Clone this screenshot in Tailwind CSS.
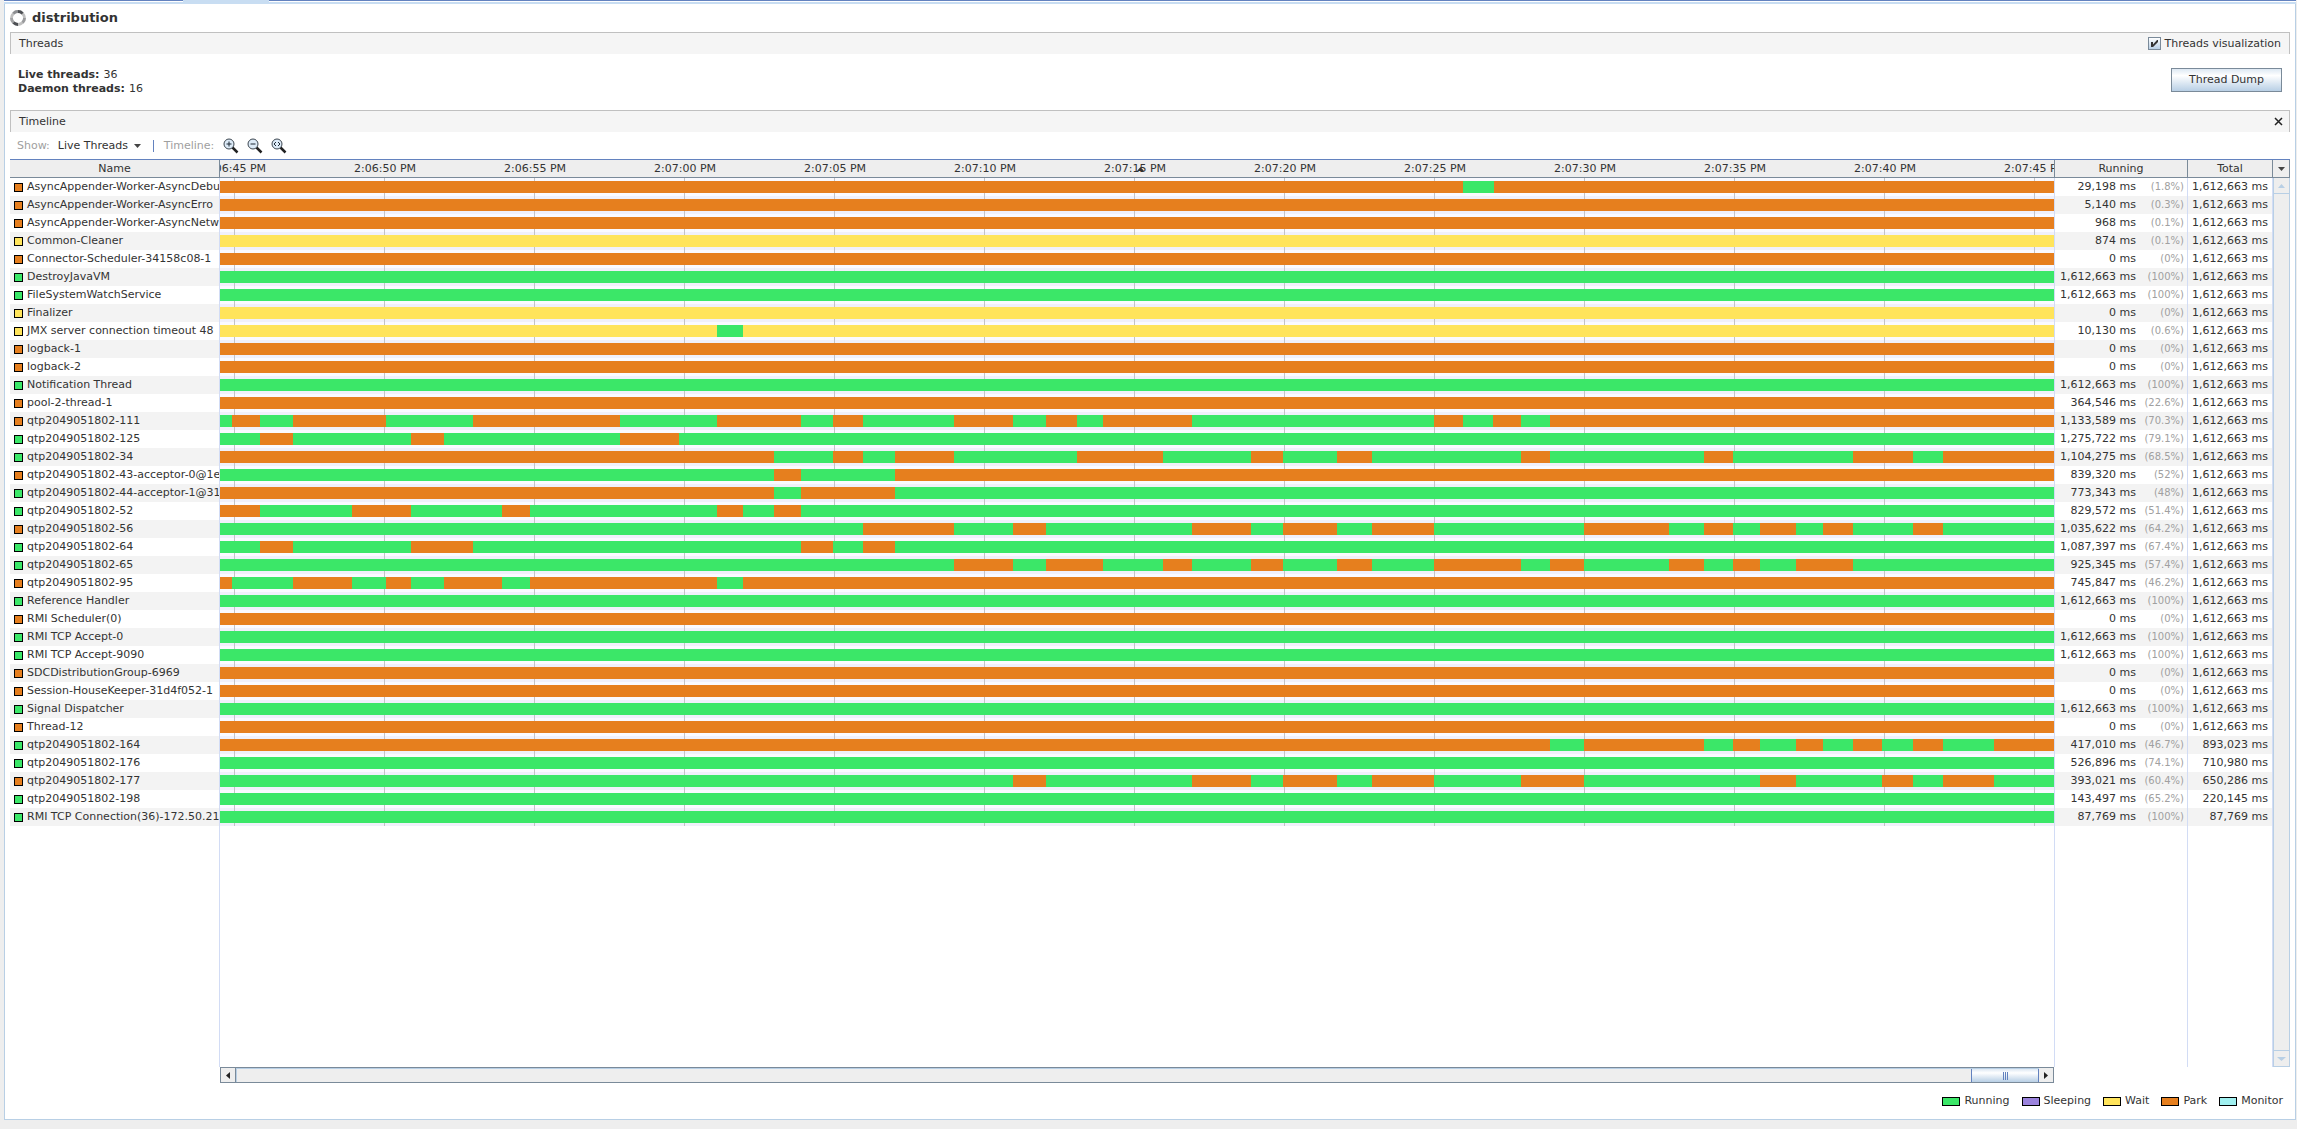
<!DOCTYPE html>
<html lang="en">

<head>
  <meta charset="UTF-8" />
  <meta name="viewport" content="width=device-width, initial-scale=1.0" />
  <title>distribution - Threads</title>
  <script src="https://cdn.jsdelivr.net/npm/@tailwindcss/browser@4"></script>
  <style>
    body {
      font-family: 'DejaVu Sans', sans-serif;
    }
  </style>
</head>

<body class="h-screen bg-[#eeeeee] text-[11px] leading-[14px] text-[#333333] flex flex-col pl-1 pr-px pb-[9px] overflow-hidden">
  <!-- Tab strip edge -->
  <div class="flex h-1 shrink-0 border-b-2 border-[#c8ddf2] bg-white">
    <div class="w-[179px] h-px bg-[#6382bf]"></div>
    <div class="w-[86px] h-1 bg-[#c8ddf2]"></div>
    <div class="grow h-px bg-[#6382bf]"></div>
  </div>

  <main class="grow min-h-0 flex flex-col bg-white border border-t-0 border-[#b8cfe5] pl-[5px] pr-[5px]">
    <!-- Title -->
    <header class="h-7 shrink-0 flex items-center gap-[6px]">
      <svg class="size-4" viewBox="0 0 16 16" fill="none" stroke-width="2.8">
        <circle cx="8" cy="8" r="6.500" stroke="#c0c0c0" />
        <path d="M3.400 3.400A6.500 6.500 0 0 1 8 1.500" stroke="#8d8f92" />
        <path d="M8 1.500A6.500 6.500 0 0 1 12.600 3.400" stroke="#4d5054" />
        <path d="M3.400 12.600A6.500 6.500 0 0 0 8 14.500" stroke="#4d5054" />
        <path d="M1.500 8A6.500 6.500 0 0 0 3.400 12.600" stroke="#a2a3a5" />
        <path d="M14.500 8A6.500 6.500 0 0 1 12.600 12.600" stroke="#999a9c" />
      </svg>
      <h1 class="text-[13px] leading-4 font-bold">distribution</h1>
    </header>

    <!-- Threads -->
    <section class="h-[22px] shrink-0 flex items-center justify-between bg-[#f5f5f5] border border-b-0 border-[#c0c0c0] px-2">
      <h2>Threads</h2>
      <label class="flex items-center gap-1">
        <span class="relative size-[13px]">
          <input type="checkbox" checked class="appearance-none block size-[13px] border border-[#7a8a99] bg-linear-to-b from-white to-[#b8cfe5]" />
          <svg class="absolute inset-0 size-[13px] pointer-events-none" viewBox="0 0 13 13" fill="#333333">
            <path d="M3 5h2v2.500L9 3h1v2L5 10H3z" />
          </svg>
        </span>
        Threads visualization
      </label>
    </section>
    <div class="h-14 shrink-0 flex items-start justify-between pt-[14px] px-2">
      <dl>
        <div class="flex gap-1"><dt class="font-bold">Live threads:</dt><dd>36</dd></div>
        <div class="flex gap-1"><dt class="font-bold">Daemon threads:</dt><dd>16</dd></div>
      </dl>
      <button type="button" class="w-[111px] h-6 border border-[#7a8a99] bg-linear-to-b from-[#dde8f3] via-white via-30% to-[#b8cfe5]">Thread Dump</button>
    </div>

    <!-- Timeline -->
    <section class="h-[22px] shrink-0 flex items-center justify-between bg-[#f5f5f5] border border-b-0 border-[#c0c0c0] pl-2 pr-[6px]">
      <h2>Timeline</h2>
      <button type="button" aria-label="Close timeline">
        <svg class="size-[9px]" viewBox="0 0 9 9" stroke="#222222" stroke-width="1.500"><path d="M1 1l7 7M8 1l-7 7" /></svg>
      </button>
    </section>
    <div class="h-[27px] shrink-0 flex items-center pl-[7px]">
      <label for="show" class="text-[#a0a0a0] mr-2">Show:</label>
      <div class="relative w-[83px]">
        <select id="show" class="appearance-none block w-full">
          <option>Live Threads</option>
        </select>
        <svg class="absolute right-0 top-[5px] w-[7px] h-1" viewBox="0 0 7 4" fill="#444444"><path d="M0 0h7L3.500 4z" /></svg>
      </div>
      <div class="w-px h-3 bg-[#6382bf] ml-3 mr-[10px]"></div>
      <span class="text-[#a0a0a0] mr-[9px]">Timeline:</span>
      <div class="flex gap-2">
        <button type="button" aria-label="Zoom in">
          <svg class="size-4" viewBox="0 0 16 16" fill="none">
            <path d="M9.500 9.500l5 5" stroke="#222222" stroke-width="2.500" />
            <circle cx="6" cy="6" r="5" fill="#dceaf7" stroke="#3c4650" />
            <path d="M3.500 6h5M6 3.500v5" stroke="#1d2935" />
          </svg>
        </button>
        <button type="button" aria-label="Zoom out">
          <svg class="size-4" viewBox="0 0 16 16" fill="none">
            <path d="M9.500 9.500l5 5" stroke="#222222" stroke-width="2.500" />
            <circle cx="6" cy="6" r="5" fill="#dceaf7" stroke="#3c4650" />
            <path d="M3.500 6h5" stroke="#1d2935" />
          </svg>
        </button>
        <button type="button" aria-label="Scale to fit">
          <svg class="size-4" viewBox="0 0 16 16" fill="none">
            <path d="M9.500 9.500l5 5" stroke="#222222" stroke-width="2.500" />
            <circle cx="6" cy="6" r="5" fill="#dceaf7" stroke="#3c4650" />
            <path d="M5 4L3 6l2 2M7 4l2 2-2 2" stroke="#1d2935" />
          </svg>
        </button>
      </div>
    </div>

    <!-- Threads table with its vertical scroll bar -->
    <div class="grow min-h-0 flex border-t border-[#6382bf]">
      <div class="grow min-w-0">
        <table class="w-full h-full table-fixed border-separate border-spacing-0 whitespace-nowrap">
          <colgroup>
            <col class="w-[210px]" />
            <col />
            <col class="w-[133px]" />
            <col class="w-[85px]" />
          </colgroup>
          <thead>
            <tr class="h-[18px] bg-[#eeeeee]">
              <th class="h-[18px] p-0 font-normal border-r border-b border-[#7a8a99]">Name</th>
              <th class="h-[18px] p-0 font-normal border-r border-b border-[#7a8a99]">
                <div class="relative overflow-hidden">
                  <div id="axis" class="flex -ml-[60px]"></div>
                  <svg class="absolute left-1/2 top-[5px] w-[7px] h-1" viewBox="0 0 7 4" fill="#333333"><path d="M0 4h7L3.500 0z" /></svg>
                </div>
              </th>
              <th class="h-[18px] p-0 font-normal border-r border-b border-[#7a8a99]">Running</th>
              <th class="h-[18px] p-0 font-normal border-r border-b border-[#7a8a99]">Total</th>
            </tr>
          </thead>
          <tbody id="rows"></tbody>
        </table>
      </div>
      <div class="w-[17px] shrink-0 flex flex-col">
        <button type="button" aria-label="Columns" class="h-[18px] shrink-0 flex items-center justify-center bg-[#eeeeee] border-r border-b border-[#7a8a99]">
          <svg class="w-[7px] h-1" viewBox="0 0 7 4" fill="#444444"><path d="M0 0h7L3.500 4z" /></svg>
        </button>
        <div class="grow flex flex-col justify-between bg-[#eeeeee] border border-t-0 border-[#b8cfe5]">
          <button type="button" aria-label="Scroll up" class="h-4 flex items-center justify-center border-b border-[#b8cfe5]">
            <svg class="w-[7px] h-1" viewBox="0 0 7 4" fill="#b8cfe5"><path d="M0 4h7L3.500 0z" /></svg>
          </button>
          <button type="button" aria-label="Scroll down" class="h-4 flex items-center justify-center border-t border-[#b8cfe5]">
            <svg class="w-[9px] h-1" viewBox="0 0 9 4" fill="#b8cfe5"><path d="M0 0h9L4.500 4z" /></svg>
          </button>
        </div>
      </div>
    </div>

    <!-- Horizontal scroll bar -->
    <div class="shrink-0 h-4 flex ml-[210px] mr-[236px] bg-[#eeeeee] border border-[#7a8a99]">
      <button type="button" aria-label="Scroll left" class="w-[15px] flex items-center justify-center border-r border-[#7a8a99]">
        <svg class="w-1 h-[7px]" viewBox="0 0 4 7" fill="#222222"><path d="M4 0v7L0 3.500z" /></svg>
      </button>
      <div class="grow flex justify-end border-l border-t border-[#b8cfe5]">
        <div class="w-[68px] flex items-center justify-center gap-px border-x border-[#6382bf] bg-linear-to-b from-[#dde8f3] via-white via-30% to-[#b8cfe5]">
          <div class="w-px h-2 bg-[#6382bf]"></div>
          <div class="w-px h-2 bg-[#6382bf]"></div>
          <div class="w-px h-2 bg-[#6382bf]"></div>
        </div>
      </div>
      <button type="button" aria-label="Scroll right" class="w-[14px] flex items-center justify-center">
        <svg class="w-1 h-[7px]" viewBox="0 0 4 7" fill="#222222"><path d="M0 0v7L4 3.500z" /></svg>
      </button>
    </div>

    <!-- Legend -->
    <footer class="h-9 shrink-0 flex items-center justify-end gap-3 pr-[7px]">
      <div class="flex items-center gap-1"><span class="w-[18px] h-[9px] border border-black bg-[#3be768]"></span>Running</div>
      <div class="flex items-center gap-1"><span class="w-[18px] h-[9px] border border-black bg-[#9b83dd]"></span>Sleeping</div>
      <div class="flex items-center gap-1"><span class="w-[18px] h-[9px] border border-black bg-[#ffe45b]"></span>Wait</div>
      <div class="flex items-center gap-1"><span class="w-[18px] h-[9px] border border-black bg-[#e67f1e]"></span>Park</div>
      <div class="flex items-center gap-1"><span class="w-[18px] h-[9px] border border-black bg-[#a0f0f0]"></span>Monitor</div>
    </footer>
  </main>

  <script>
    const colors = { R: 'bg-[#3be768]', W: 'bg-[#ffe45b]', P: 'bg-[#e67f1e]' };
    const full = '1,612,663';

    // name, current state, running ms, running %, total ms, alternating states, x of each state change
    const threads = [
      ['AsyncAppender-Worker-AsyncDebu', 'P', '29,198', '1.8', full, 'PR', [1243, 1274]],
      ['AsyncAppender-Worker-AsyncErro', 'P', '5,140', '0.3', full, 'P', []],
      ['AsyncAppender-Worker-AsyncNetw', 'P', '968', '0.1', full, 'P', []],
      ['Common-Cleaner', 'W', '874', '0.1', full, 'W', []],
      ['Connector-Scheduler-34158c08-1', 'P', '0', '0', full, 'P', []],
      ['DestroyJavaVM', 'R', full, '100', full, 'R', []],
      ['FileSystemWatchService', 'R', full, '100', full, 'R', []],
      ['Finalizer', 'W', '0', '0', full, 'W', []],
      ['JMX server connection timeout 48', 'W', '10,130', '0.6', full, 'WR', [497, 523]],
      ['logback-1', 'P', '0', '0', full, 'P', []],
      ['logback-2', 'P', '0', '0', full, 'P', []],
      ['Notification Thread', 'R', full, '100', full, 'R', []],
      ['pool-2-thread-1', 'P', '364,546', '22.6', full, 'P', []],
      ['qtp2049051802-111', 'P', '1,133,589', '70.3', full, 'RP', [12, 40, 73, 166, 253, 400, 497, 581, 613, 643, 734, 793, 826, 857, 883, 972, 1214, 1243, 1273, 1301, 1330]],
      ['qtp2049051802-125', 'R', '1,275,722', '79.1', full, 'RP', [40, 73, 191, 224, 400, 459]],
      ['qtp2049051802-34', 'R', '1,104,275', '68.5', full, 'PR', [554, 613, 643, 675, 734, 857, 943, 1031, 1063, 1117, 1152, 1301, 1330, 1484, 1513, 1633, 1693, 1723]],
      ['qtp2049051802-43-acceptor-0@1e', 'P', '839,320', '52', full, 'RP', [554, 581, 675]],
      ['qtp2049051802-44-acceptor-1@31', 'R', '773,343', '48', full, 'PR', [554, 581, 675]],
      ['qtp2049051802-52', 'R', '829,572', '51.4', full, 'PR', [40, 132, 191, 282, 310, 497, 523, 554, 581]],
      ['qtp2049051802-56', 'P', '1,035,622', '64.2', full, 'RP', [643, 734, 793, 826, 972, 1031, 1063, 1117, 1152, 1214, 1364, 1449, 1484, 1513, 1540, 1576, 1603, 1633, 1693, 1723]],
      ['qtp2049051802-64', 'R', '1,087,397', '67.4', full, 'RP', [40, 73, 191, 253, 581, 613, 643, 675]],
      ['qtp2049051802-65', 'R', '925,345', '57.4', full, 'RP', [734, 793, 826, 883, 943, 972, 1031, 1063, 1117, 1152, 1214, 1301, 1330, 1364, 1449, 1484, 1513, 1540, 1576, 1633]],
      ['qtp2049051802-95', 'P', '745,847', '46.2', full, 'PR', [12, 73, 132, 166, 191, 224, 282, 310, 497, 523]],
      ['Reference Handler', 'R', full, '100', full, 'R', []],
      ['RMI Scheduler(0)', 'P', '0', '0', full, 'P', []],
      ['RMI TCP Accept-0', 'R', full, '100', full, 'R', []],
      ['RMI TCP Accept-9090', 'R', full, '100', full, 'R', []],
      ['SDCDistributionGroup-6969', 'P', '0', '0', full, 'P', []],
      ['Session-HouseKeeper-31d4f052-1', 'P', '0', '0', full, 'P', []],
      ['Signal Dispatcher', 'R', full, '100', full, 'R', []],
      ['Thread-12', 'P', '0', '0', full, 'P', []],
      ['qtp2049051802-164', 'R', '417,010', '46.7', '893,023', 'PR', [1330, 1364, 1484, 1513, 1540, 1576, 1603, 1633, 1662, 1693, 1723, 1774]],
      ['qtp2049051802-176', 'R', '526,896', '74.1', '710,980', 'R', []],
      ['qtp2049051802-177', 'P', '393,021', '60.4', '650,286', 'RP', [793, 826, 972, 1031, 1063, 1117, 1152, 1214, 1301, 1364, 1540, 1576, 1662, 1693, 1723, 1774]],
      ['qtp2049051802-198', 'R', '143,497', '65.2', '220,145', 'R', []],
      ['RMI TCP Connection(36)-172.50.21', 'R', '87,769', '100', '87,769', 'R', []],
    ];

    function bar(states, changes) {
      let x = 0;
      let html = '';
      changes.forEach((end, i) => {
        html += `<div class="shrink-0 ${colors[states[i % 2]]}" style="width:${end - x}px"></div>`;
        x = end;
      });
      return html + `<div class="grow ${colors[states[changes.length % states.length]]}"></div>`;
    }

    document.getElementById('rows').innerHTML = threads.map(([name, state, running, pct, total, states, changes], i) => `
      <tr class="h-[18px] ${i % 2 ? 'bg-[#f3f3f3]' : 'bg-white'}">
        <td class="h-[18px] p-0 border-r border-[#d2dcf5]">
          <div class="flex items-center gap-1 pl-1 overflow-hidden">
            <span class="size-[9px] shrink-0 border border-black ${colors[state]}"></span>${name}
          </div>
        </td>
        <td class="h-[18px] p-0 border-r border-[#d2dcf5] ${i % 2 ? 'bg-[#f0f0fa]' : 'bg-[#fafaff]'} bg-[linear-gradient(to_right,#c3c3c6_1px,transparent_1px)] bg-[length:150px_18px] bg-[position:14px_0]">
          <div class="flex h-3 overflow-hidden">${bar(states, changes)}</div>
        </td>
        <td class="h-[18px] p-0 border-r border-[#d2dcf5]">
          <div class="flex items-center justify-end pr-[3px]">
            ${running} ms<span class="w-12 text-right text-[10px] text-[#a0a0a0]">(${pct}%)</span>
          </div>
        </td>
        <td class="h-[18px] p-0 pr-1 border-r border-[#d2dcf5] text-right">${total} ms</td>
      </tr>`).join('') + `
      <tr aria-hidden="true">
        <td class="border-r border-[#d2dcf5]"></td>
        <td class="border-r border-[#d2dcf5]"></td>
        <td class="border-r border-[#d2dcf5]"></td>
        <td class="border-r border-[#d2dcf5]"></td>
      </tr>`;

    const times = ['2:06:45', '2:06:50', '2:06:55', '2:07:00', '2:07:05', '2:07:10', '2:07:15', '2:07:20', '2:07:25', '2:07:30', '2:07:35', '2:07:40', '2:07:45'];
    document.getElementById('axis').innerHTML = times.map((t) => `<span class="w-[150px] shrink-0 text-center">${t} PM</span>`).join('');
  </script>
</body>

</html>
